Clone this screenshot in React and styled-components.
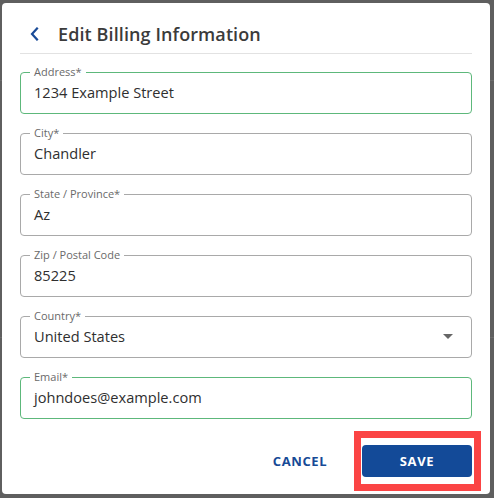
import React from "react";
import styled, { createGlobalStyle } from "styled-components";

const Global = createGlobalStyle`
  html, body { margin: 0; padding: 0; }
  body {
    width: 494px;
    height: 498px;
    overflow: hidden;
    font-family: "Open Sans", "Noto Sans", sans-serif;
    background-color: #5f5f5f;
    background-image:
      linear-gradient(to bottom, transparent 80px, #6c6c6c 80px, #6c6c6c 81px, transparent 81px),
      linear-gradient(to bottom, transparent 337px, #6c6c6c 337px, #6c6c6c 338px, transparent 338px);
  }
  * { box-sizing: border-box; }
`;

const Dialog = styled.div`
  margin: 3px 4px 0 2px;
  width: 488px;
  height: 491px;
  background: #fff;
  border-radius: 4px;
  padding: 0 18px;
  display: flex;
  flex-direction: column;
`;

const Header = styled.div`
  height: 51px;
  padding-top: 12px;
  display: flex;
  align-items: center;
  border-bottom: 1px solid #e2e2e2;
`;

const BackButton = styled.button`
  border: 0;
  background: none;
  padding: 0;
  margin: 0 0 0 8px;
  width: 14px;
  height: 20px;
  display: flex;
  align-items: center;
  justify-content: center;
  color: #1a4b97;
  cursor: pointer;
`;

const Title = styled.h2`
  margin: 0 0 0 16px;
  font-size: 18px;
  font-weight: 600;
  color: #3b3b3b;
  letter-spacing: 0.1px;
`;

const Form = styled.div`
  display: flex;
  flex-direction: column;
  gap: 19px;
  padding-top: 18px;
`;

const Field = styled.div`
  position: relative;
  height: 42px;
  border: 1px solid ${(p) => (p.$valid ? "#5db87b" : "#a9a9a9")};
  border-radius: 4px;
  display: flex;
  align-items: center;
  padding: 0 16px 2px 13px;
`;

const Label = styled.span`
  position: absolute;
  top: -8px;
  left: 9px;
  padding: 0 4px;
  background: #fff;
  font-size: 11px;
  line-height: 14px;
  color: #6a6a6a;
`;

const Value = styled.span`
  flex: 1;
  font-size: 14.6px;
  color: #2f2f2f;
`;

const Caret = styled.span`
  width: 0;
  height: 0;
  border-left: 5px solid transparent;
  border-right: 5px solid transparent;
  border-top: 5px solid #666;
  margin-top: 0;
  margin-right: 2px;
`;

const Footer = styled.div`
  display: flex;
  justify-content: flex-end;
  align-items: center;
  gap: 17px;
  margin-top: 26px;
`;

const TextButton = styled.button`
  border: 0;
  background: none;
  width: 90px;
  height: 32px;
  font-family: inherit;
  font-size: 13px;
  font-weight: 700;
  letter-spacing: 0.6px;
  color: #164a96;
  cursor: pointer;
`;

const SaveWrap = styled.div`
  position: relative;
`;

const PrimaryButton = styled.button`
  border: 0;
  width: 110px;
  height: 32px;
  border-radius: 4px;
  background: #134a98;
  color: #fff;
  font-family: inherit;
  font-size: 13px;
  font-weight: 700;
  letter-spacing: 0.6px;
  cursor: pointer;
  display: block;
`;

const Highlight = styled.span`
  position: absolute;
  left: -8px;
  top: -14px;
  right: -9px;
  bottom: -14px;
  border: 7px solid #fb4444;
  pointer-events: none;
`;

const fields = [
  { label: "Address*", value: "1234 Example Street", valid: true },
  { label: "City*", value: "Chandler" },
  { label: "State / Province*", value: "Az" },
  { label: "Zip / Postal Code", value: "85225" },
  { label: "Country*", value: "United States", select: true },
  { label: "Email*", value: "johndoes@example.com", valid: true },
];

export default function App() {
  return (
    <>
      <Global />
      <Dialog>
        <Header>
          <BackButton aria-label="Back">
            <svg width="10" height="14" viewBox="0 0 10 14" fill="none">
              <path d="M7 1.5L2 7l5 5.5" stroke="currentColor" strokeWidth="2.2" strokeLinecap="square" />
            </svg>
          </BackButton>
          <Title>Edit Billing Information</Title>
        </Header>
        <Form>
          {fields.map((f) => (
            <Field key={f.label} $valid={f.valid}>
              <Label>{f.label}</Label>
              <Value>{f.value}</Value>
              {f.select && <Caret />}
            </Field>
          ))}
        </Form>
        <Footer>
          <TextButton>CANCEL</TextButton>
          <SaveWrap>
            <PrimaryButton>SAVE</PrimaryButton>
            <Highlight />
          </SaveWrap>
        </Footer>
      </Dialog>
    </>
  );
}
